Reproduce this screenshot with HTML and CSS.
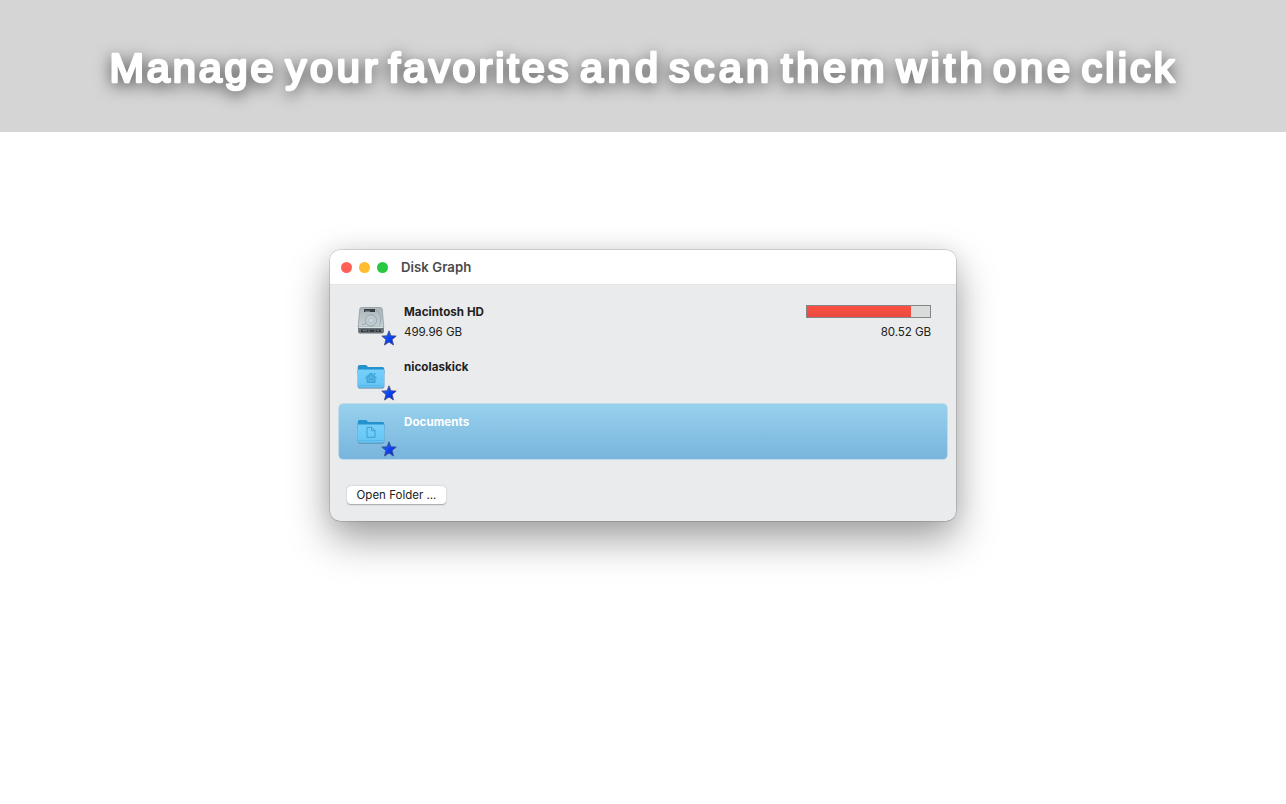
FILE: index.html
```html
<!DOCTYPE html>
<html lang="en">
<head>
<meta charset="utf-8">
<title>Disk Graph</title>
<link rel="stylesheet" href="styles.css">
</head>
<body>
<svg width="0" height="0" class="defs">
  <defs>
    <linearGradient id="blue" x1="0" y1="0" x2="1" y2="1"><stop offset="0" stop-color="#2b78ff"/><stop offset=".6" stop-color="#0a3cf2"/><stop offset="1" stop-color="#0626dc"/></linearGradient>
    <linearGradient id="metal" x1="0" y1="0" x2="0" y2="1"><stop offset="0" stop-color="#aab3b7"/><stop offset="1" stop-color="#c6d2d8"/></linearGradient>
    <linearGradient id="front" x1="0" y1="0" x2="0" y2="1"><stop offset="0" stop-color="#77d0fb"/><stop offset="1" stop-color="#65c4f5"/></linearGradient>
    <symbol id="star" viewBox="0 0 16 16"><path d="M8 .8 9.9 5.8 15.2 6.1 11.1 9.5 12.5 15 8 12 3.5 15 4.9 9.5 .8 6.1 6.1 5.8Z" fill="url(#blue)" stroke="#3c4a78" stroke-width=".8" stroke-linejoin="round"/></symbol>
    <symbol id="folder" viewBox="0 0 28 26">
      <path d="M.7 3.2Q.7 1 2.7 1H8.3Q9.5 1 10.2 2L11 3H25.3Q27.3 3 27.3 5V10H.7Z" fill="#2492cc"/>
      <path d="M.7 6H27.3V22.5Q27.3 24.5 25.3 24.5H2.7Q.7 24.5 .7 22.5Z" fill="#4f7f9b"/>
      <path d="M.7 6.6Q.7 5.4 2.2 5.4H25.8Q27.3 5.4 27.3 6.6V21.7Q27.3 23.7 25.3 23.7H2.7Q.7 23.7 .7 21.7Z" fill="url(#front)"/>
      <path d="M1.3 21.5H26.7" stroke="#4daddd" stroke-width=".6"/>
    </symbol>
  </defs>
</svg>
<header class="banner">
  <svg class="headline" width="1286" height="132" viewBox="0 0 1286 132" role="heading">
    <text y="81.7">
      <tspan x="109.5" textLength="164">Manage</tspan>
      <tspan x="285.5" textLength="92">your</tspan>
      <tspan x="388.5" textLength="180">favorites</tspan>
      <tspan x="580" textLength="78">and</tspan>
      <tspan x="669" textLength="100">scan</tspan>
      <tspan x="781" textLength="103.5">them</tspan>
      <tspan x="896.5" textLength="86">with</tspan>
      <tspan x="993" textLength="77">one</tspan>
      <tspan x="1081.5" textLength="93">click</tspan>
    </text>
  </svg>
</header>
<main class="stage">
  <section class="window">
    <div class="titlebar">
      <div class="lights"><i class="red"></i><i class="amber"></i><i class="green"></i></div>
      <h1 class="title">Disk Graph</h1>
    </div>
    <div class="list">
      <article class="row">
        <div class="icon">
          <svg class="disk" width="28" height="30" viewBox="0 0 28 30">
            <path d="M4.4 1.5H23.6Q25 1.5 25.2 3L26.8 21H1.2L2.8 3Q3 1.5 4.4 1.5Z" fill="url(#metal)" stroke="#899398" stroke-width=".7"/>
            <path d="M1.1 21.5H26.9V25.5Q26.9 27.5 25 27.5H3Q1.1 27.5 1.1 25.5Z" fill="#687277"/>
            <path d="M2 21.4H26" stroke="#e1e8eb" stroke-width="1"/>
            <path d="M4 23.5H24V26H4Z" fill="#363b3e"/><path d="M12 23.5V26M18 23.5V26M6 24.7H10M20 24.7H22" stroke="#89939a" stroke-width=".8"/>
            <path d="M7 3H18V6H7Z" fill="#353b3e"/><path d="M8 5.2H13" stroke="#aeb7bb" stroke-width=".8"/>
            <circle cx="14" cy="14.5" r="5.6" fill="#becbd2" stroke="#939fa6" stroke-width=".8"/>
            <circle cx="14" cy="14.5" r="2.3" fill="#d1dce1" stroke="#9ba8ae" stroke-width=".6"/>
            <path d="M18.5 4Q23.5 6 23.8 13Q23.8 17.5 22 19.5M5 18.5Q8 19 9.5 17" fill="none" stroke="#929fa6" stroke-width=".8"/>
          </svg>
          <svg class="star"><use href="#star"/></svg>
        </div>
        <div class="info"><b>Macintosh HD</b><span>499.96 GB</span></div>
        <div class="usage"><div class="meter"><div class="fill" style="width:84.5%"></div></div><span>80.52 GB</span></div>
      </article>
      <article class="row">
        <div class="icon">
          <svg class="folder" width="28" height="26" viewBox="0 0 28 26"><use href="#folder"/><path d="M8.3 14 14 9 19.7 14" fill="none" stroke="#2e97cb" stroke-width="1"/><path d="M10 14V18.5H18V14L14 10.6ZM12.9 18.5V15.2H15.1V18.5" fill="#52b4e3" stroke="#2e97cb" stroke-width=".8"/><path d="M17.7 9V11" stroke="#2e97cb"/></svg>
          <svg class="star"><use href="#star"/></svg>
        </div>
        <div class="info"><b>nicolaskick</b></div>
      </article>
      <article class="row selected">
        <div class="icon">
          <svg class="folder" width="28" height="26" viewBox="0 0 28 26"><use href="#folder"/><path d="M10 8.3H14.8L18 11.5V18.3H10ZM14.6 8.3V11.7H18" fill="none" stroke="#3195c5" stroke-width=".8" stroke-linejoin="round"/></svg>
          <svg class="star"><use href="#star"/></svg>
        </div>
        <div class="info"><b>Documents</b></div>
      </article>
    </div>
    <button class="open">Open Folder ...</button>
  </section>
</main>
</body>
</html>
```

FILE: styles.css
```css
* { box-sizing: border-box; }
body { margin: 0; height: 804px; overflow: hidden; background: #fff; font-family: Inter, "Liberation Sans", sans-serif; color: #222; }
.defs { position: absolute; }
.banner { height: 132px; background: #d5d5d5; overflow: hidden; }
.headline { display: block; }
.headline text {
  font: 400 41.5px "Liberation Sans", sans-serif;
  fill: #fff; stroke: #fff; stroke-width: 2.7px; stroke-linejoin: round;
  filter: drop-shadow(0 4px 8px rgba(0, 0, 0, .6));
}
.stage { display: flex; justify-content: center; padding-top: 118px; }
.window {
  width: 626px; height: 271px; border-radius: 10px; background: #e9ebec; padding-bottom: 17px;
  box-shadow: 0 0 0 .5px rgba(0, 0, 0, .25), 0 18px 40px rgba(0, 0, 0, .37), 0 0 22px rgba(0, 0, 0, .08);
}
.titlebar { height: 35px; padding: 0 11px; display: flex; align-items: center; gap: 13px; background: #fff; border-radius: 10px 10px 0 0; border-bottom: 1px solid #e3e4e5; }
.lights { display: flex; gap: 7px; }
.lights i { width: 11px; height: 11px; border-radius: 50%; }
.red { background: #ff5f57; }
.amber { background: #febc2e; }
.green { background: #28c840; }
.title { margin: 0; font-size: 13.2px; font-weight: 600; line-height: 16px; letter-spacing: .04px; color: #4b4b4b; }
.list { padding: 8px 9px 0; }
.row { height: 55.4px; padding: 10.6px 16px 0 18px; display: flex; border-radius: 4px; }
.selected { background: linear-gradient(#98d1ed, #78b4dd); box-shadow: 0 0 0 .5px #9bcae3; color: #fff; }
.icon { position: relative; width: 47px; }
.disk { display: block; margin: 2px 0 0 .4px; }
.folder { display: block; margin: 5px 0 0 .4px; }
.star { position: absolute; left: 23.7px; top: 26.4px; width: 16px; height: 16px; }
.info { flex: 1; }
b, .info span, .usage span { display: block; font-size: 11.6px; line-height: 16px; }
b { font-weight: 700; letter-spacing: .05px; }
.info span, .usage span { margin-top: 4.6px; letter-spacing: -.08px; }
.usage { width: 125px; text-align: right; padding-top: 1.4px; }
.meter { height: 13px; border: 1px solid #858585; background: #dadcdb; }
.fill { height: 100%; background: linear-gradient(#fc4f43, #e94a42); }
.usage span { margin-top: 5.9px; }
.open { display: block; margin: 27px 0 0 17px; width: 99px; height: 18px; padding: 0; border: 0; border-radius: 4px; background: #fff; color: #222; font: 11.5px/17px Inter, sans-serif; letter-spacing: 0; box-shadow: 0 .5px 1.5px rgba(0, 0, 0, .3); }
```
